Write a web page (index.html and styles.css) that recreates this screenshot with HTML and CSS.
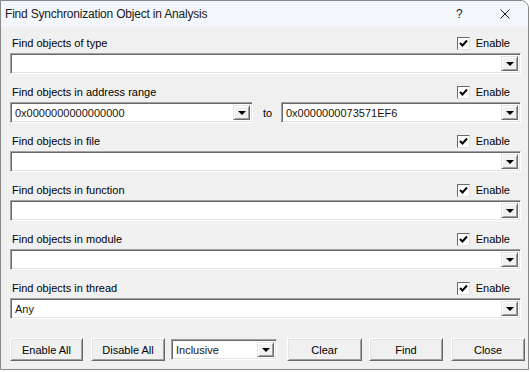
FILE: index.html
```html
<!DOCTYPE html>
<html lang="en">
<head>
  <meta charset="UTF-8" />
  <title>Find Synchronization Object in Analysis</title>
  <link rel="stylesheet" href="styles.css">
</head>
<body>
  <div class="window">
    <div class="titlebar">
      <span class="title">Find Synchronization Object in Analysis</span>
      <span class="help">?</span>
      <span class="close">
        <svg width="10" height="10" viewBox="0 0 10 10"><path d="M0.5 0.5 L9.5 9.5 M9.5 0.5 L0.5 9.5" stroke="#1a1a1a" stroke-width="1" fill="none"/></svg>
      </span>
    </div>
    <div class="dialog">
      <div class="group">
        <div class="group-head">
          <span class="label">Find objects of type</span>
          <span class="check"><span class="box"><svg width="9" height="9" viewBox="0 0 9 9"><path d="M1 4 L3.5 6.5 L8 1.5" stroke="#000" stroke-width="2" fill="none"/></svg></span>Enable</span>
        </div>
        <div class="combo"><span class="combo-text"></span><span class="drop"></span></div>
      </div>
      <div class="group">
        <div class="group-head">
          <span class="label">Find objects in address range</span>
          <span class="check"><span class="box"><svg width="9" height="9" viewBox="0 0 9 9"><path d="M1 4 L3.5 6.5 L8 1.5" stroke="#000" stroke-width="2" fill="none"/></svg></span>Enable</span>
        </div>
        <div class="range">
          <div class="combo"><span class="combo-text">0x0000000000000000</span><span class="drop"></span></div>
          <span class="to">to</span>
          <div class="combo"><span class="combo-text">0x0000000073571EF6</span><span class="drop"></span></div>
        </div>
      </div>
      <div class="group">
        <div class="group-head">
          <span class="label">Find objects in file</span>
          <span class="check"><span class="box"><svg width="9" height="9" viewBox="0 0 9 9"><path d="M1 4 L3.5 6.5 L8 1.5" stroke="#000" stroke-width="2" fill="none"/></svg></span>Enable</span>
        </div>
        <div class="combo"><span class="combo-text"></span><span class="drop"></span></div>
      </div>
      <div class="group">
        <div class="group-head">
          <span class="label">Find objects in function</span>
          <span class="check"><span class="box"><svg width="9" height="9" viewBox="0 0 9 9"><path d="M1 4 L3.5 6.5 L8 1.5" stroke="#000" stroke-width="2" fill="none"/></svg></span>Enable</span>
        </div>
        <div class="combo"><span class="combo-text"></span><span class="drop"></span></div>
      </div>
      <div class="group">
        <div class="group-head">
          <span class="label">Find objects in module</span>
          <span class="check"><span class="box"><svg width="9" height="9" viewBox="0 0 9 9"><path d="M1 4 L3.5 6.5 L8 1.5" stroke="#000" stroke-width="2" fill="none"/></svg></span>Enable</span>
        </div>
        <div class="combo"><span class="combo-text"></span><span class="drop"></span></div>
      </div>
      <div class="group group-last">
        <div class="group-head">
          <span class="label">Find objects in thread</span>
          <span class="check"><span class="box"><svg width="9" height="9" viewBox="0 0 9 9"><path d="M1 4 L3.5 6.5 L8 1.5" stroke="#000" stroke-width="2" fill="none"/></svg></span>Enable</span>
        </div>
        <div class="combo"><span class="combo-text">Any</span><span class="drop"></span></div>
      </div>
      <div class="buttons">
        <button class="btn">Enable All</button>
        <button class="btn btn-disable">Disable All</button>
        <div class="combo combo-mode"><span class="combo-text">Inclusive</span><span class="drop"></span></div>
        <button class="btn btn-clear">Clear</button>
        <button class="btn btn-find">Find</button>
        <button class="btn btn-close">Close</button>
      </div>
    </div>
  </div>
</body>
</html>
```
FILE: styles.css
```css
* {
  box-sizing: border-box;
  margin: 0;
  padding: 0;
}
body {
  background-color: #fff;
  font-family: 'Liberation Sans', Arial, sans-serif;
  font-size: 11px;
  color: #000;
}
.window {
  width: 529px;
  height: 370px;
  border: 1px solid #8a8a8a;
  border-top-right-radius: 8px;
  background-color: #f0f0f0;
  overflow: hidden;
}
.titlebar {
  height: 26px;
  background-color: #f3f6fb;
  display: flex;
  align-items: center;
  font-size: 12px;
  color: #1a1a1a;
}
.title {
  padding-left: 4px;
  flex: 1;
  letter-spacing: -0.2px;
}
.help {
  width: 14px;
  font-size: 12px;
  margin-right: 30px;
}
.close {
  display: flex;
  margin-right: 18px;
}
.dialog {
  padding: 8px 7px 0 9px;
}
.group {
  margin-bottom: 10px;
}
.group-last {
  margin-bottom: 19px;
}
.group-head {
  height: 16px;
  display: flex;
  align-items: center;
  justify-content: space-between;
  margin-bottom: 2px;
  padding-left: 2px;
}
.check {
  display: flex;
  align-items: center;
  padding-right: 11px;
}
.box {
  width: 13px;
  height: 13px;
  margin-right: 6px;
  background-color: #fff;
  border: 1px solid;
  border-color: #696969 #e3e3e3 #e3e3e3 #696969;
  display: flex;
  align-items: center;
  justify-content: center;
}
.combo {
  height: 21px;
  background-color: #fff;
  border: 1px solid;
  border-color: #a0a0a0 #fff #fff #a0a0a0;
  box-shadow: inset 1px 1px #696969, inset -1px -1px #e3e3e3;
  display: flex;
  align-items: center;
  padding: 2px;
}
.combo-text {
  flex: 1;
  padding-left: 2px;
  color: #1a1208;
}
.drop {
  width: 17px;
  height: 15px;
  background-color: #f0f0f0;
  border: 1px solid;
  border-color: #e3e3e3 #696969 #696969 #e3e3e3;
  box-shadow: inset 1px 1px #fff, inset -1px -1px #a0a0a0;
  display: flex;
  align-items: center;
  justify-content: center;
}
.drop::after {
  content: '';
  border-left: 4px solid transparent;
  border-right: 4px solid transparent;
  border-top: 4px solid #000;
  margin-top: 1px;
}
.range {
  display: grid;
  grid-template-columns: 243px 28px 1fr;
  align-items: center;
}
.to {
  text-align: center;
  padding-left: 1px;
}
.buttons {
  display: flex;
  align-items: center;
  height: 23px;
}
.buttons > * {
  flex-shrink: 0;
}
.btn {
  width: 73px;
  height: 23px;
  font-family: 'Liberation Sans', Arial, sans-serif;
  font-size: 11px;
  color: #000;
  background-color: #f0f0f0;
  border: 1px solid;
  border-color: #fff #696969 #696969 #fff;
  box-shadow: inset 1px 1px #e3e3e3, inset -1px -1px #a0a0a0;
}
.btn-disable {
  width: 74px;
  margin-left: 8px;
}
.combo-mode {
  width: 106px;
  margin-left: 6px;
}
.btn-clear {
  width: 75px;
  margin-left: 10px;
}
.btn-find {
  width: 74px;
  margin-left: 7px;
}
.btn-close {
  width: 74px;
  margin-left: 8px;
}
```
